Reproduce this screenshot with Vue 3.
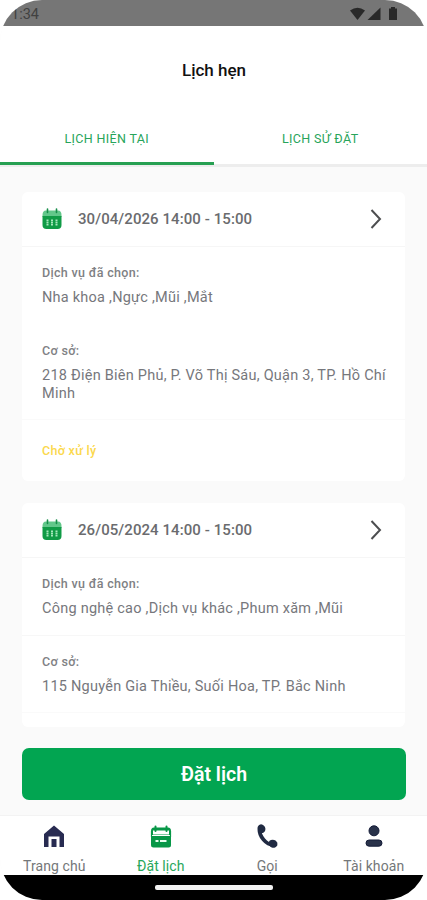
<script setup>
const tabs = ['LỊCH HIỆN TẠI', 'LỊCH SỬ ĐẶT']
const appointments = [
  {
    time: '30/04/2026 14:00 - 15:00',
    services: 'Nha khoa ,Ngực ,Mũi ,Mắt',
    place: '218 Điện Biên Phủ, P. Võ Thị Sáu, Quận 3, TP. Hồ Chí Minh',
    status: 'Chờ xử lý'
  },
  {
    time: '26/05/2024 14:00 - 15:00',
    services: 'Công nghệ cao ,Dịch vụ khác ,Phum xăm ,Mũi',
    place: '115 Nguyễn Gia Thiều, Suối Hoa, TP. Bắc Ninh',
    status: ''
  }
]
</script>

<template>
  <div class="screen">
    <div class="status-bar">
      <span class="clock">1:34</span>
      <svg class="signals" width="48" height="16" viewBox="0 0 48 16">
        <path d="M0 4.500Q7.500 -1 15 4.500L7.500 14z" />
        <path d="M17.500 14L30.500 1.500V14z" />
        <path d="M39 2.500h2V1h4v1.500h2V14h-8z" />
      </svg>
    </div>
    <header class="header"><h1>Lịch hẹn</h1></header>
    <div class="tabs">
      <div v-for="(tab, i) in tabs" :key="tab" class="tab" :class="{ active: i === 0 }">
        <span>{{ tab }}</span>
      </div>
    </div>

    <main class="list">
      <article v-for="item in appointments" :key="item.time" class="card">
        <div class="card-head">
          <svg class="calendar" width="20" height="22" viewBox="0 0 20 22">
            <path d="M0.500 7Q0.500 2.500 4 2.500H16Q19.500 2.500 19.500 7V9H0.500z" fill="#62c78a" />
            <path d="M0.500 8H19.500V17Q19.500 21 15.500 21H4.500Q0.500 21 0.500 17z" fill="#109b46" />
            <path d="M5.500 1V4.500M14.500 1V4.500" stroke="#168d49" stroke-width="1.600" stroke-linecap="round" />
            <path d="M5.500 11.500V17.500M10 11.500V17.500M14.500 11.500V17.500" stroke="#a5e8bb" stroke-width="2" stroke-dasharray="1.700 .45" />
          </svg>
          <span class="time">{{ item.time }}</span>
          <svg class="chevron" width="12" height="22" viewBox="0 0 12 22">
            <path d="M1.500 2L10 11L1.500 20" fill="none" stroke="#4d4e50" stroke-width="2" />
          </svg>
        </div>
        <section class="services">
          <div class="label">Dịch vụ đã chọn:</div>
          <div class="value">{{ item.services }}</div>
        </section>
        <section class="place">
          <div class="label">Cơ sở:</div>
          <div class="value">{{ item.place }}</div>
        </section>
        <div class="state">{{ item.status }}</div>
      </article>
    </main>

    <div class="action"><button>Đặt lịch</button></div>

    <nav class="nav">
      <a class="nav-item home">
        <svg width="24" height="24" viewBox="0 0 24 24" fill="#282b51">
          <path d="M2 9L12 0.500L22 9V22H17.500V11.500H6.500V22H2z" />
          <path d="M9.500 14H14.500V22H9.500z" />
        </svg>
        <span>Trang chủ</span>
      </a>
      <a class="nav-item booking">
        <svg width="24" height="24" viewBox="0 0 24 24">
          <path d="M2 10V6Q2 2.500 5 2.500H19Q22 2.500 22 6V10z" fill="#079747" />
          <path d="M4 5.500H20V9.500H4z" fill="#fff" />
          <path d="M2 11H22V20Q22 22.500 19.500 22.500H4.500Q2 22.500 2 20z" fill="#079747" />
          <path d="M2.500 6V12M21.500 6V12" stroke="#079747" stroke-width="1.200" />
          <path d="M6.500 1.500V6M17.500 1.500V6" stroke="#079747" stroke-width="2" stroke-linecap="round" />
          <path d="M6.500 16H9.500M11 16H17.500" stroke="#e7ffef" stroke-width="2" />
        </svg>
        <span>Đặt lịch</span>
      </a>
      <a class="nav-item call">
        <svg width="24" height="26" viewBox="0 0 24 26">
          <path d="M3.800 4.800C3.800 12 10.500 21.500 19 21.500" fill="none" stroke="#202a42" stroke-width="4.200" />
          <ellipse cx="6" cy="4" rx="4.200" ry="4.800" fill="#202a42" transform="rotate(-25 6 4)" />
          <ellipse cx="18.500" cy="20.300" rx="4.900" ry="4.200" fill="#202a42" transform="rotate(20 18.500 20.300)" />
        </svg>
        <span>Gọi</span>
      </a>
      <a class="nav-item account">
        <svg width="24" height="24" viewBox="0 0 24 24" fill="#29324a" stroke="#141c38">
          <circle cx="12" cy="5.800" r="5" />
          <rect x="4" y="15" width="16" height="6.200" rx="3.100" />
        </svg>
        <span>Tài khoản</span>
      </a>
    </nav>
    <div class="gesture-bar"><div class="handle"></div></div>
  </div>
</template>

<style>
body { background: #fff; }
</style>

<style scoped>
.screen {
  width: 427px;
  height: 900px;
  display: flex;
  flex-direction: column;
  overflow: hidden;
  border-radius: 42px;
  background: #fafafa;
  font-family: Roboto, "Liberation Sans", sans-serif;
}
.status-bar {
  height: 26px;
  flex: none;
  box-sizing: border-box;
  padding: 5px 29px 0 11px;
  display: flex;
  justify-content: space-between;
  background: #767676;
}
.clock { font-size: 14.5px; line-height: 19px; color: #414141; }
.signals { fill: #292929; margin-top: 1px; }
.header {
  height: 87px;
  flex: none;
  display: flex;
  justify-content: center;
  align-items: center;
  background: #fff;
}
h1 { margin: 0; padding-left: 1px; font-size: 17px; line-height: 20px; font-weight: 500; color: #111; }
.tabs { height: 54px; flex: none; display: flex; background: linear-gradient(#fff 52px, #ededed 52px); }
.tab {
  flex: 1;
  box-sizing: border-box;
  display: flex;
  justify-content: center;
  padding-top: 18px;
  border-bottom: 3px solid #ededed;
  font-size: 12.5px;
  line-height: 16px;
  letter-spacing: 0.36px;
  color: #27a45a;
}
.tab.active { height: 52px; border-bottom: 3px solid #27a052; }
.list {
  height: 560px;
  flex: none;
  box-sizing: border-box;
  padding: 25px 22px 0;
  display: flex;
  flex-direction: column;
  gap: 22px;
}
.card { border-radius: 6px; background: #fff; overflow: hidden; flex: none; }
.card:last-child { height: 224px; }
.card-head {
  height: 55px;
  box-sizing: border-box;
  display: flex;
  align-items: center;
  padding: 0 23px 0 20px;
  border-bottom: 1px solid #f6f6f6;
}
.time { margin-left: 16px; font-size: 15px; font-weight: 500; letter-spacing: 0.08px; color: #6a6b6e; }
.chevron { margin-left: auto; }
section { box-sizing: border-box; padding: 18px 20px 0; }
.services { height: 78px; }
.place { height: 95px; border-bottom: 1px solid #fafafa; }
.card:last-child .services { border-bottom: 1px solid #f7f7f7; }
.card:last-child .place { height: 77px; }
.label { font-size: 12.5px; line-height: 16px; font-weight: 500; letter-spacing: 0.32px; color: #808184; }
.value { margin-top: 8px; margin-right: -6px; font-size: 14.5px; line-height: 17.5px; letter-spacing: 0.24px; color: #76777c; }
.state {
  height: 61px;
  box-sizing: border-box;
  padding: 23px 20px 0;
  font-size: 12.5px;
  line-height: 16px;
  font-weight: 500;
  letter-spacing: 0.3px;
  color: #fbd84c;
}
.action { height: 88px; flex: none; box-sizing: border-box; padding: 21px 21px 0 22px; }
button {
  width: 100%;
  height: 52px;
  padding: 0;
  border: 0;
  border-radius: 7px;
  background: #02a551;
  color: #fff;
  font: 600 19.5px/54px Roboto, "Liberation Sans", sans-serif;
}
.nav {
  height: 60px;
  flex: none;
  box-sizing: border-box;
  padding: 9px 0 0 1px;
  display: grid;
  grid-template-columns: repeat(4, 1fr);
  background: #fff;
  border-top: 1px solid #f3f3f3;
}
.nav-item { display: flex; flex-direction: column; align-items: center; color: #747779; }
.nav-item svg { height: 24px; flex: none; overflow: visible; }
.nav-item span { margin-top: 8px; font-size: 14px; line-height: 18px; letter-spacing: 0.08px; }
.nav-item.booking { color: #28a75b; }
.gesture-bar { flex: 1; display: flex; justify-content: center; padding-top: 10px; background: #000; }
.handle { width: 118px; height: 5px; border-radius: 2px; background: #f2f2f2; }
</style>
